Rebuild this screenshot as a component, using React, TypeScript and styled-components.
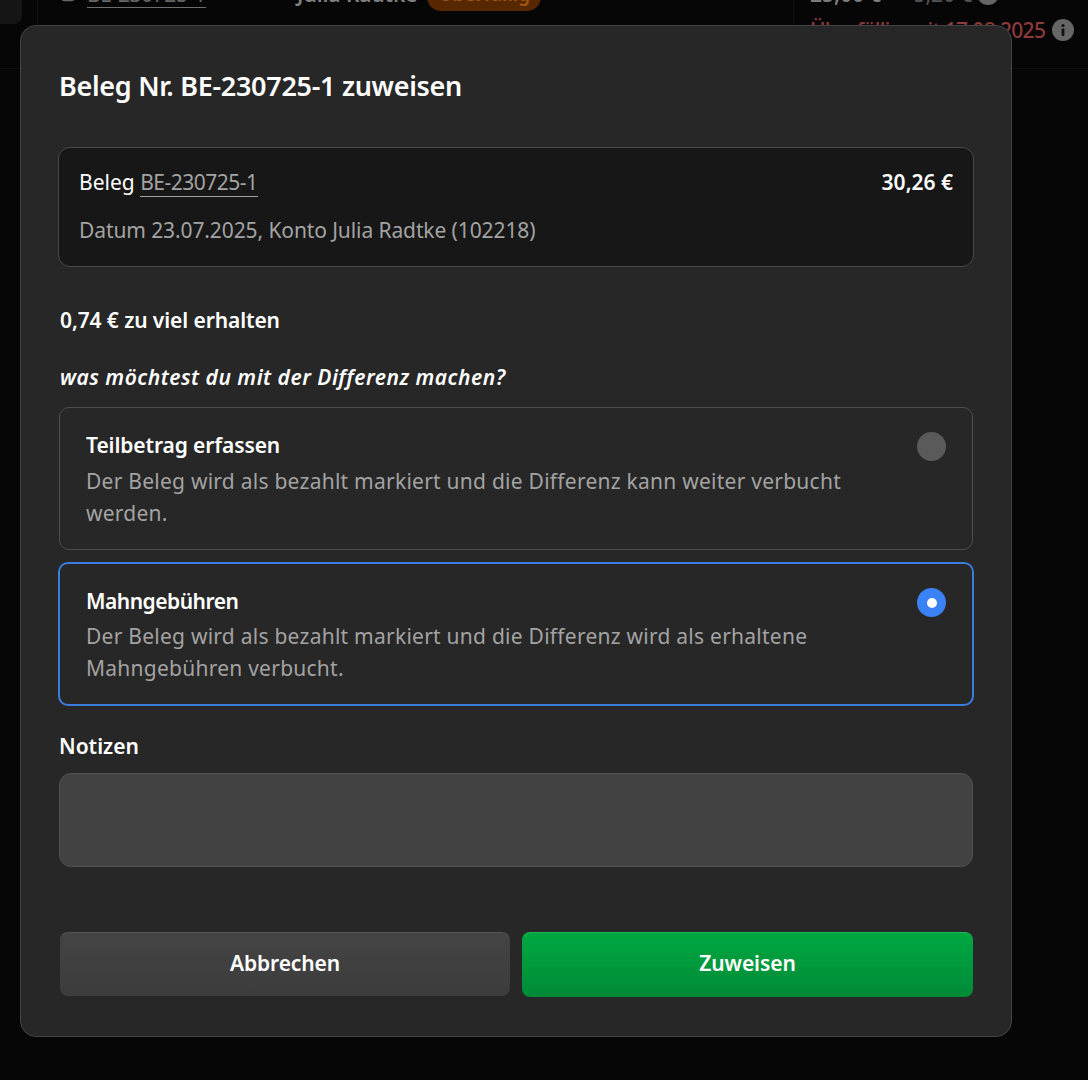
import styled, { createGlobalStyle } from 'styled-components';
import { File } from 'lucide-react';

const GlobalStyle = createGlobalStyle`
  html, body {
    margin: 0;
    padding: 0;
    background: #060606;
  }
`

const Page = styled.div`
  position: relative;
  width: 1088px;
  height: 1080px;
  overflow: hidden;
  background: #060606;
  font-family: "Noto Sans", "Open Sans", sans-serif;
  color: #fff;
`

const BackRow = styled.div`
  display: grid;
  grid-template-columns: 38px 258px 497px 295px;
  height: 88px;
  margin-top: -20px;
  border-bottom: 1px solid #101010;
  color: #5c5c5c;
  font-size: 21px;
  line-height: 28px;
`

const BackHandleCell = styled.div`
  border-right: 1px solid #101010;
`

const BackHandle = styled.div`
  width: 22px;
  height: 44px;
  background: #151515;
  border-radius: 0 8px 8px 0;
`

const BackCell = styled.div`
  display: flex;
  align-items: flex-start;
  height: 28px;
  padding-left: 1px;
`

const BackReceiptCell = styled(BackCell)`
  align-items: center;
  gap: 11px;
  padding-left: 22px;
`

const BackLink = styled.span`
  color: #666;
  border-bottom: 1px solid #6e6e6e;
  line-height: 26px;
  letter-spacing: -0.4px;
`

const BackName = styled.span`
  color: #808080;
  font-weight: 600;
  letter-spacing: -0.1px;
`

const Badge = styled.span`
  margin: -1px 0 0 10px;
  height: 32px;
  padding: 0 11px;
  background: #572800;
  color: #9c5812;
  border-radius: 14px;
  font-size: 19px;
  font-weight: 600;
  line-height: 30px;
  white-space: nowrap;
`

const BackAmounts = styled.div`
  display: flex;
  flex-direction: column;
  gap: 8px;
  padding-left: 16px;
  border-left: 1px solid #101010;
  height: 88px;
`

const BackAmountLine = styled.div`
  display: flex;
  align-items: center;
  height: 28px;
  white-space: nowrap;
`

const BackTotal = styled.span`
  color: #7c7c7c;
  font-weight: 600;
  margin-right: 32px;
`

const BackOpen = styled.span`
  color: #555;
  margin-right: 4px;
`

const BackOverdue = styled.span`
  color: #8c3a3a;
  font-weight: 500;
  letter-spacing: -0.7px;
  margin-right: 7px;
`

const ModalBox = styled.div`
  position: absolute;
  left: 20px;
  top: 25px;
  width: 992px;
  height: 1012px;
  box-sizing: border-box;
  padding: 43px 37px 0 37px;
  background: #272727;
  border: 1px solid #444;
  border-radius: 16px;
  display: flex;
  flex-direction: column;
`

const Title = styled.h2`
  margin: 0 0 44px 1px;
  font-size: 27px;
  line-height: 34px;
  font-weight: 600;
  letter-spacing: -0.3px;
`

const ReceiptCard = styled.div`
  width: 916px;
  height: 120px;
  box-sizing: border-box;
  padding: 20px 20px;
  background: #171717;
  border: 1px solid #4a4a4a;
  border-radius: 12px;
`

const ReceiptTop = styled.div`
  display: flex;
  justify-content: space-between;
  font-size: 21px;
  line-height: 28px;
`

const ReceiptLink = styled.span`
  color: #a3a3a3;
  border-bottom: 1px solid #a3a3a3;
  letter-spacing: -0.5px;
`

const Amount = styled.span`
  font-weight: 600;
`

const ReceiptMeta = styled.div`
  margin-top: 20px;
  font-size: 21px;
  line-height: 28px;
  letter-spacing: -0.1px;
  color: #a3a3a3;
`

const Diff = styled.div`
  margin: 39px 0 0 2px;
  font-size: 21px;
  line-height: 28px;
  font-weight: 600;
  letter-spacing: -0.1px;
`

const Question = styled.div`
  margin: 29px 0 16px 2px;
  font-size: 21px;
  line-height: 28px;
  font-weight: 600;
  font-style: italic;
  letter-spacing: 0.5px;
`

const Option = styled.div<{ $selected?: boolean }>`
  width: ${p => (p.$selected ? 916 : 914)}px;
  height: ${p => (p.$selected ? 144 : 143)}px;
  box-sizing: border-box;
  margin: ${p => (p.$selected ? '12px 0 0 0' : '0 0 0 1px')};
  padding: 21px 26px 0 26px;
  border: ${p => (p.$selected ? '2px solid #3b7ddd' : '1px solid #4d4d4d')};
  border-radius: 10px;
  display: flex;
  justify-content: space-between;
`

const OptionText = styled.div`
  width: 780px;
`

const OptionTitle = styled.div<{ $tight?: boolean }>`
  font-size: 21px;
  line-height: 32px;
  font-weight: 600;
  letter-spacing: ${p => (p.$tight ? '-0.5px' : '-0.1px')};
`

const OptionDesc = styled.div<{ $gap: number }>`
  margin-top: ${p => p.$gap}px;
  font-size: 21px;
  line-height: 32px;
  letter-spacing: 0.25px;
  color: #a3a3a3;
`

const Radio = styled.span<{ $selected?: boolean }>`
  width: 29px;
  height: 29px;
  margin-top: 3px;
  flex: none;
  border-radius: 50%;
  background: ${p => (p.$selected ? '#3b82f6' : '#5a5a5a')};
  display: flex;
  align-items: center;
  justify-content: center;
  &::after {
    content: '';
    display: ${p => (p.$selected ? 'block' : 'none')};
    width: 10px;
    height: 10px;
    border-radius: 50%;
    background: #fff;
  }
`

const NotesLabel = styled.div`
  margin: 26px 0 13px 1px;
  font-size: 21px;
  line-height: 28px;
  font-weight: 600;
`

const NotesInput = styled.div`
  width: 914px;
  height: 94px;
  box-sizing: border-box;
  margin-left: 1px;
  background: #424242;
  border: 1px solid #505050;
  border-radius: 12px;
`

const Actions = styled.div`
  display: grid;
  grid-template-columns: 450px 451px;
  gap: 12px;
  margin: 65px 0 0 2px;
  align-items: start;
`

const ActionButton = styled.div<{ $primary?: boolean }>`
  height: ${p => (p.$primary ? 65 : 64)}px;
  box-sizing: border-box;
  padding-bottom: 4px;
  display: flex;
  align-items: center;
  justify-content: center;
  border-radius: 8px;
  font-size: 21px;
  font-weight: 600;
  letter-spacing: -0.1px;
  background: ${p => (p.$primary ? 'linear-gradient(#00a841, #008a37)' : 'linear-gradient(#444, #3c3c3c)')};
  border-top: 1px solid ${p => (p.$primary ? '#1fb558' : '#555')};
`

const InfoIcon = () => (
  <svg width="22" height="22" viewBox="0 0 22 22">
    <circle cx="11" cy="11" r="11" fill="#666" />
    <circle cx="11" cy="6.5" r="1.6" fill="#111" />
    <rect x="9.6" y="9.5" width="2.8" height="7.5" rx="1" fill="#111" />
  </svg>
)

export default function App() {
  return (
    <Page>
      <GlobalStyle />
      <BackRow>
        <BackHandleCell><BackHandle /></BackHandleCell>
        <BackReceiptCell>
          <File size={16} color="#666" />
          <BackLink>BE-230725-1</BackLink>
        </BackReceiptCell>
        <BackCell>
          <BackName>Julia Radtke</BackName>
          <Badge>Überfällig</Badge>
        </BackCell>
        <BackAmounts>
          <BackAmountLine>
            <BackTotal>25,00 €</BackTotal>
            <BackOpen>5,20 €</BackOpen>
            <InfoIcon />
          </BackAmountLine>
          <BackAmountLine>
            <BackOverdue>Überfällig seit 17.08.2025</BackOverdue>
            <InfoIcon />
          </BackAmountLine>
        </BackAmounts>
      </BackRow>
      <ModalBox>
        <Title>Beleg Nr. BE-230725-1 zuweisen</Title>
        <ReceiptCard>
          <ReceiptTop>
            <span>Beleg <ReceiptLink>BE-230725-1</ReceiptLink></span>
            <Amount>30,26 €</Amount>
          </ReceiptTop>
          <ReceiptMeta>Datum 23.07.2025, Konto Julia Radtke (102218)</ReceiptMeta>
        </ReceiptCard>
        <Diff>0,74 € zu viel erhalten</Diff>
        <Question>was möchtest du mit der Differenz machen?</Question>
        <Option>
          <OptionText>
            <OptionTitle>Teilbetrag erfassen</OptionTitle>
            <OptionDesc $gap={4}>Der Beleg wird als bezahlt markiert und die Differenz kann weiter verbucht werden.</OptionDesc>
          </OptionText>
          <Radio />
        </Option>
        <Option $selected>
          <OptionText>
            <OptionTitle $tight>Mahngebühren</OptionTitle>
            <OptionDesc $gap={3}>Der Beleg wird als bezahlt markiert und die Differenz wird als erhaltene Mahngebühren verbucht.</OptionDesc>
          </OptionText>
          <Radio $selected />
        </Option>
        <NotesLabel>Notizen</NotesLabel>
        <NotesInput />
        <Actions>
          <ActionButton>Abbrechen</ActionButton>
          <ActionButton $primary>Zuweisen</ActionButton>
        </Actions>
      </ModalBox>
    </Page>
  )
}
